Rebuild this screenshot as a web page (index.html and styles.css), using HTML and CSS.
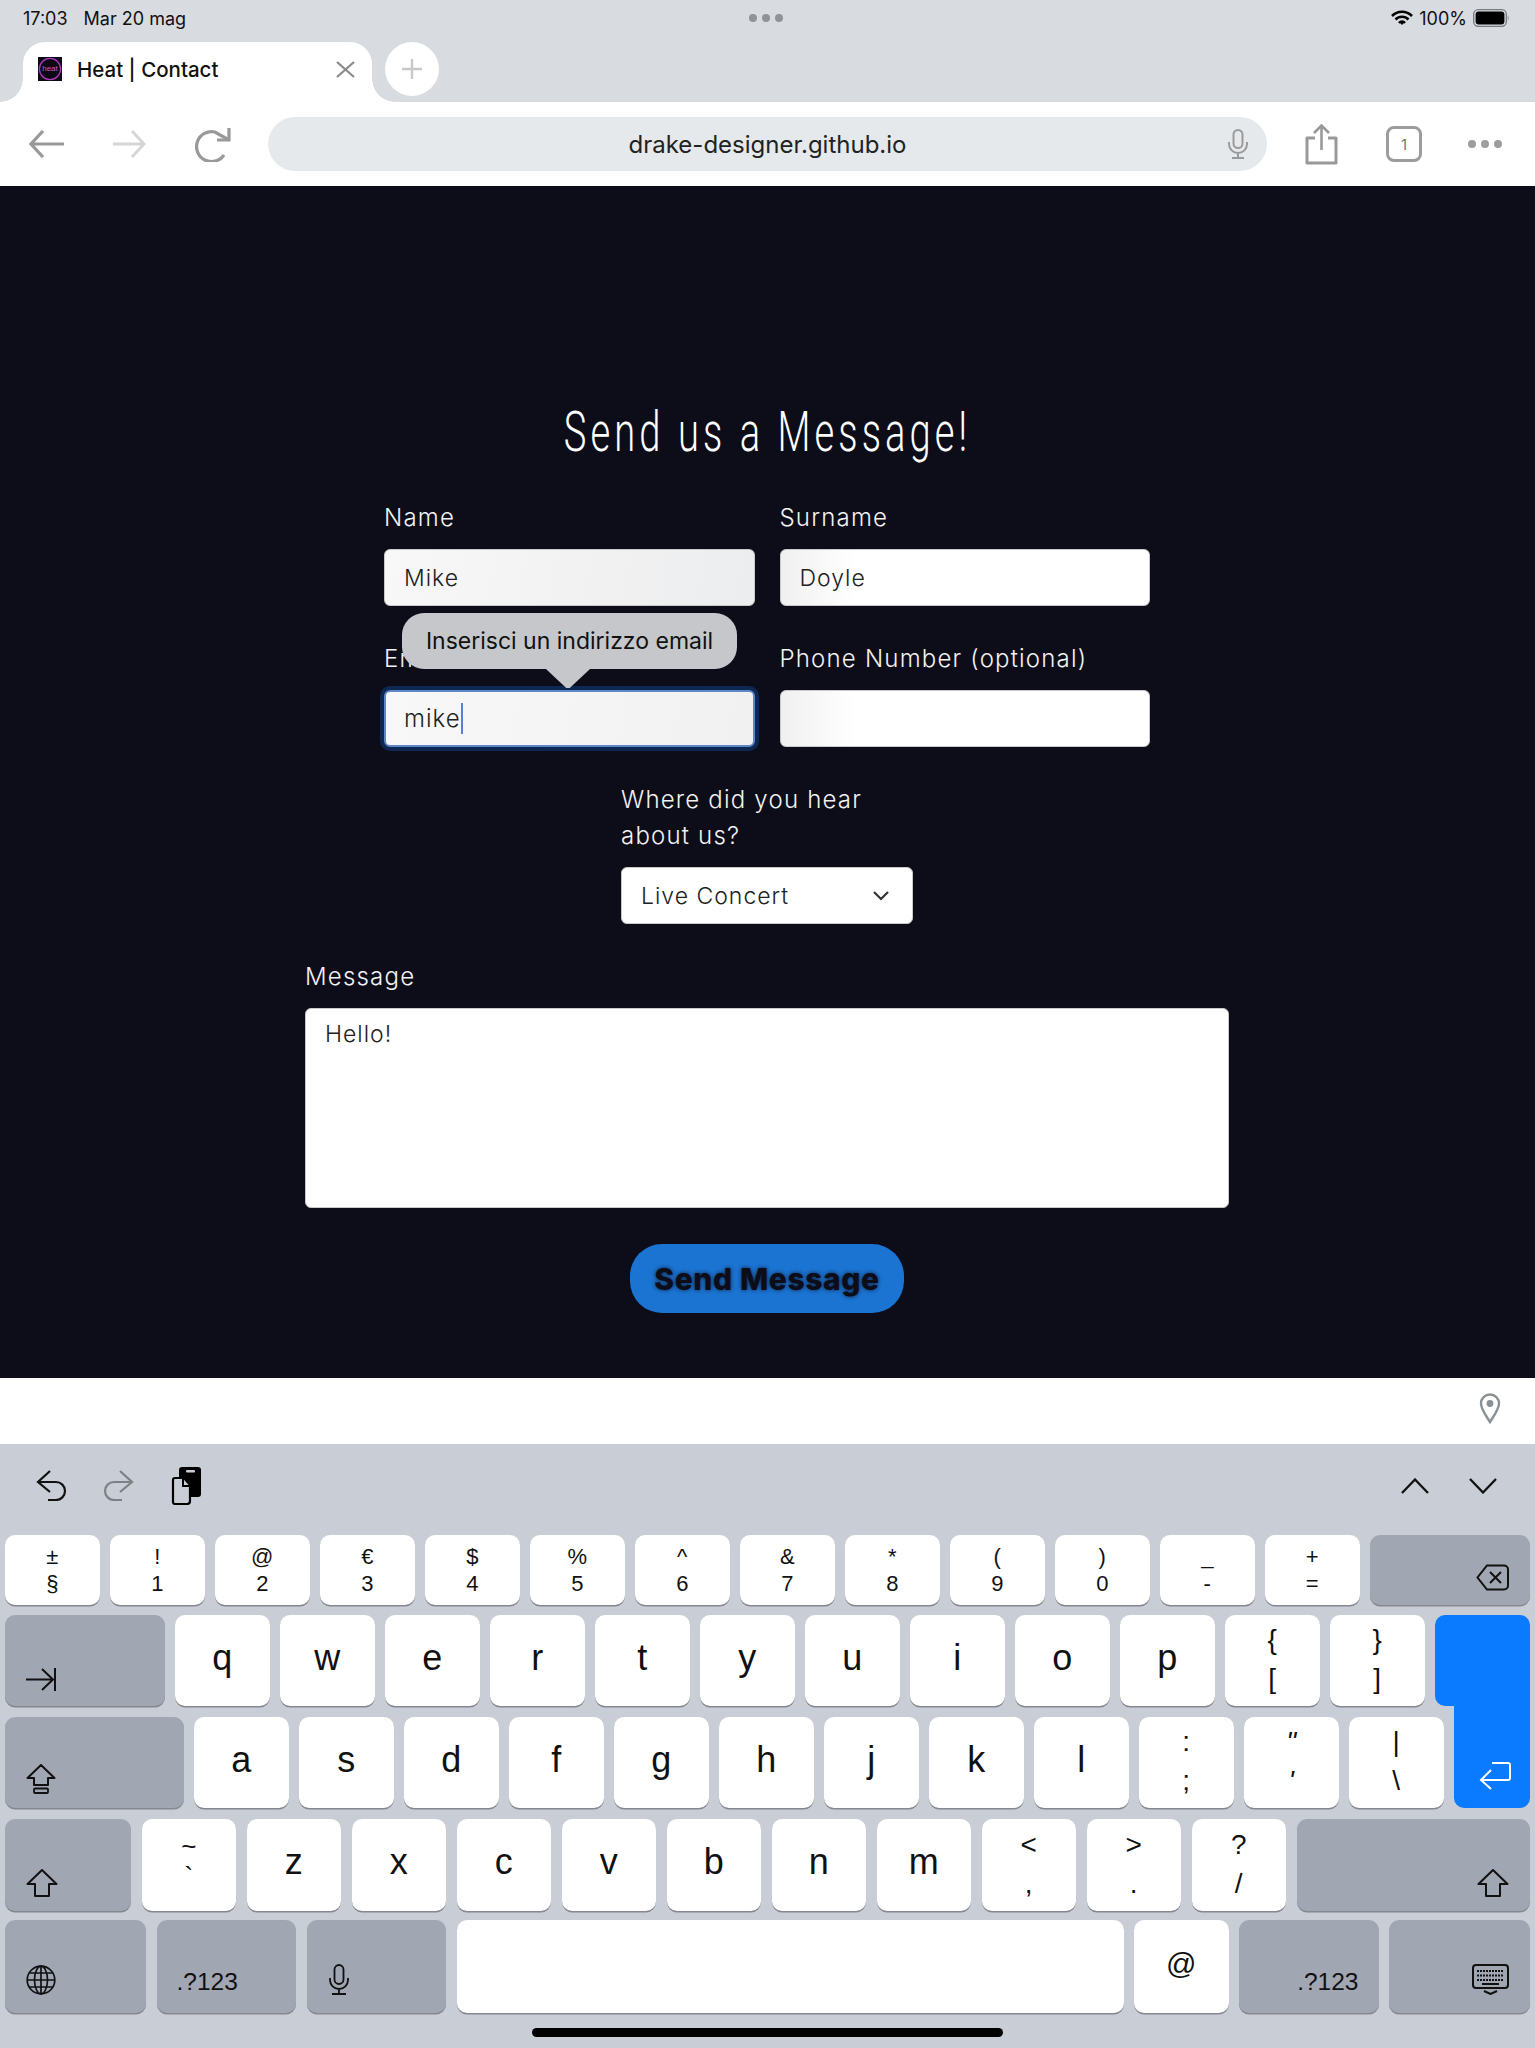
FILE: index.html
```html
<!DOCTYPE html>
<html lang="it">
<head>
    <meta charset="UTF-8">
    <meta name="viewport" content="width=device-width, initial-scale=1.0">
    <title>Heat | Contact</title>
    <link rel="stylesheet" href="styles.css">
</head>
<body>
    <header class="chrome">
        <div class="status">
            <div class="status-left"><span>17:03</span><span>Mar 20 mag</span></div>
            <div class="status-dots"><i></i><i></i><i></i></div>
            <div class="status-right">
                <svg width="22" height="16" viewBox="0 0 22 16"><path d="M1 6a14 14 0 0 1 20 0M4.500 9.500a9 9 0 0 1 13 0M8 13a4 4 0 0 1 6 0" fill="none" stroke="#000" stroke-width="2.600"/><path d="M9.600 13.400 11 15l1.400-1.600a2 2 0 0 0-2.800 0z" fill="#000"/></svg>
                <span>100%</span>
                <svg width="36" height="18" viewBox="0 0 36 18"><rect x=".7" y=".7" width="32.600" height="16.600" rx="4.500" fill="none" stroke="#77797d" stroke-width="1.300"/><rect x="2.600" y="2.600" width="28.800" height="12.800" rx="3" fill="#000"/><path d="M34.800 6.500c1 .4 1 4.600 0 5z" fill="#77797d"/></svg>
            </div>
        </div>
        <div class="tabstrip">
            <div class="tab">
                <svg class="favicon" width="24" height="24" viewBox="0 0 24 24"><rect width="24" height="24" fill="#0c0714"/><circle cx="12" cy="12" r="10.600" fill="none" stroke="#b23ac0" stroke-width="1.300"/><text x="12" y="14" text-anchor="middle" class="favicon-text">heat</text></svg>
                <span class="tab-title">Heat | Contact</span>
                <svg class="tab-close" width="19" height="17" viewBox="0 0 19 17"><path d="M1 1l17 15M18 1 1 16" stroke="#8a8a8a" stroke-width="2.200" fill="none"/></svg>
            </div>
            <div class="newtab"><svg width="22" height="22" viewBox="0 0 22 22"><path d="M11 1v20M1 11h20" stroke="#c8c8c8" stroke-width="2.400"/></svg></div>
        </div>
        <div class="toolbar">
            <svg class="tb-back" width="36" height="28" viewBox="0 0 36 28"><path d="M35 14H2M14 1 2 14l12 13" fill="none" stroke="#999" stroke-width="3.200"/></svg>
            <svg class="tb-forward" width="34" height="28" viewBox="0 0 34 28"><path d="M1 14h31M20 1l12 13-12 13" fill="none" stroke="#d6d6d6" stroke-width="3"/></svg>
            <svg class="tb-reload" width="36" height="35" viewBox="0 0 36 35"><path d="M29 28A15 15 0 1 1 20 5l14 8" fill="none" stroke="#999" stroke-width="3.200"/><path d="M34 1v12H22" fill="none" stroke="#999" stroke-width="3.200"/></svg>
            <div class="urlbar">
                <span>drake-designer.github.io</span>
                <svg class="url-mic" width="22" height="30" viewBox="0 0 22 30"><rect x="6.500" y="1" width="9" height="18" rx="4.500" fill="none" stroke="#9a9a9a" stroke-width="2"/><path d="M2 13v2a9 9 0 0 0 18 0v-2M11 24v5M5 29h12" fill="none" stroke="#9a9a9a" stroke-width="2"/></svg>
            </div>
            <svg class="tb-share" width="33" height="41" viewBox="0 0 33 41"><path d="M10 14H2v25h29V14h-8" fill="none" stroke="#999" stroke-width="3" stroke-linejoin="round"/><path d="M16.500 26V2M9 9l7.500-7.500L24 9" fill="none" stroke="#999" stroke-width="2.600"/></svg>
            <div class="tb-tabs">1</div>
            <div class="tb-more"><i></i><i></i><i></i></div>
        </div>
    </header>

    <main class="page">
        <h1 class="page-title"><span>Send us a Message!</span></h1>
        <form class="contact-form">
            <div class="form-grid">
                <div class="field">
                    <label>Name</label>
                    <div class="input input-gray">Mike</div>
                </div>
                <div class="field">
                    <label>Surname</label>
                    <div class="input input-fade">Doyle</div>
                </div>
                <div class="field field-email">
                    <label>Email</label>
                    <div class="input input-focus">mike<b class="caret"></b></div>
                    <div class="tooltip">Inserisci un indirizzo email</div>
                </div>
                <div class="field">
                    <label>Phone Number (optional)</label>
                    <div class="input input-fade"></div>
                </div>
            </div>
            <div class="field field-hear">
                <label>Where did you hear about us?</label>
                <div class="input select">Live Concert
                    <svg width="18" height="11" viewBox="0 0 18 11"><path d="M2 2l7 7 7-7" fill="none" stroke="#333" stroke-width="2.200"/></svg>
                </div>
            </div>
            <div class="field field-message">
                <label>Message</label>
                <div class="textarea">Hello!</div>
            </div>
            <button type="button" class="send">Send Message</button>
        </form>
    </main>

    <div class="assist">
        <svg width="22" height="31" viewBox="0 0 22 31"><path d="M11 29C6 21 2 16 2 10.500a9 9 0 0 1 18 0C20 16 16 21 11 29z" fill="none" stroke="#8a9094" stroke-width="2.400"/><circle cx="11" cy="10.500" r="3.400" fill="#8a9094"/></svg>
    </div>

    <section class="keyboard">
        <div class="kb-tools">
            <div class="kb-tools-left">
                <svg width="31" height="31" viewBox="0 0 31 31"><path d="M14 1 2 12l12 10M2 12h18a9 9 0 0 1 0 18h-8" fill="none" stroke="#111" stroke-width="2.200"/></svg>
                <svg width="31" height="31" viewBox="0 0 31 31"><path d="M17 1l12 11-12 10M29 12H11a9 9 0 0 0 0 18h8" fill="none" stroke="#7d8085" stroke-width="2.200"/></svg>
                <svg class="kb-clip" width="31" height="38" viewBox="0 0 31 38"><rect x="8" y="0" width="22" height="30" rx="3" fill="#000"/><rect x="15" y="3" width="9" height="2.500" rx="1" fill="#c9cdd5"/><path d="M2 13a2 2 0 0 1 2-2h9l6 7v16a3 3 0 0 1-3 3H4a2 2 0 0 1-2-2z" fill="#c9cdd5" stroke="#000" stroke-width="2.200"/><path d="M12 11v8h7" fill="none" stroke="#000" stroke-width="2"/></svg>
            </div>
            <div class="kb-tools-right">
                <svg width="28" height="16" viewBox="0 0 28 16"><path d="M1 15 14 1.500 27 15" fill="none" stroke="#111" stroke-width="2.300"/></svg>
                <svg width="28" height="16" viewBox="0 0 28 16"><path d="M1 1l13 13.500L27 1" fill="none" stroke="#111" stroke-width="2.300"/></svg>
            </div>
        </div>

        <div class="kb-row row-num">
            <div class="key dbl"><span>±</span><span>§</span></div>
            <div class="key dbl"><span>!</span><span>1</span></div>
            <div class="key dbl"><span>@</span><span>2</span></div>
            <div class="key dbl"><span>€</span><span>3</span></div>
            <div class="key dbl"><span>$</span><span>4</span></div>
            <div class="key dbl"><span>%</span><span>5</span></div>
            <div class="key dbl"><span>^</span><span>6</span></div>
            <div class="key dbl"><span>&amp;</span><span>7</span></div>
            <div class="key dbl"><span>*</span><span>8</span></div>
            <div class="key dbl"><span>(</span><span>9</span></div>
            <div class="key dbl"><span>)</span><span>0</span></div>
            <div class="key dbl"><span>_</span><span>-</span></div>
            <div class="key dbl"><span>+</span><span>=</span></div>
            <div class="key mod grow end">
                <svg width="33" height="27" viewBox="0 0 33 27"><path d="M11 1.500h17a4 4 0 0 1 4 4v16a4 4 0 0 1-4 4H11L1.500 13.500z" fill="none" stroke="#111" stroke-width="2"/><path d="M14 8l11 11M25 8 14 19" stroke="#111" stroke-width="2"/></svg>
            </div>
        </div>

        <div class="kb-row row-tall">
            <div class="key mod w-tab">
                <svg width="30" height="25" viewBox="0 0 30 25"><path d="M0 12.500h26M16 2l11 10.500L16 23M29 1v23" fill="none" stroke="#111" stroke-width="2"/></svg>
            </div>
            <div class="key ltr">q</div>
            <div class="key ltr">w</div>
            <div class="key ltr">e</div>
            <div class="key ltr">r</div>
            <div class="key ltr">t</div>
            <div class="key ltr">y</div>
            <div class="key ltr">u</div>
            <div class="key ltr">i</div>
            <div class="key ltr">o</div>
            <div class="key ltr">p</div>
            <div class="key dbl big"><span>{</span><span>[</span></div>
            <div class="key dbl big"><span>}</span><span>]</span></div>
            <div class="key return-top"></div>
        </div>

        <div class="kb-row row-tall row-home">
            <div class="key mod w-lock">
                <svg width="30" height="30" viewBox="0 0 30 30"><path d="M15 1 1.500 14H8v7h14v-7h6.500z" fill="none" stroke="#111" stroke-width="2" stroke-linejoin="round"/><rect x="8" y="24.500" width="14" height="4.500" rx="1" fill="none" stroke="#111" stroke-width="1.800"/></svg>
            </div>
            <div class="key ltr">a</div>
            <div class="key ltr">s</div>
            <div class="key ltr">d</div>
            <div class="key ltr">f</div>
            <div class="key ltr">g</div>
            <div class="key ltr">h</div>
            <div class="key ltr">j</div>
            <div class="key ltr">k</div>
            <div class="key ltr">l</div>
            <div class="key dbl big"><span>:</span><span>;</span></div>
            <div class="key dbl big slanted"><span>"</span><span>'</span></div>
            <div class="key dbl big"><span>|</span><span>\</span></div>
            <div class="key return-bottom">
                <svg width="32" height="28" viewBox="0 0 32 28"><path d="M13 1h16a2 2 0 0 1 2 2v13a2 2 0 0 1-2 2H3M12 8 2 18l10 9" fill="none" stroke="#fff" stroke-width="2"/></svg>
            </div>
        </div>

        <div class="kb-row row-low">
            <div class="key mod w-shift">
                <svg width="32" height="28" viewBox="0 0 32 28"><path d="M16 1 1.500 15H9v12h14V15h7.500z" fill="none" stroke="#111" stroke-width="2" stroke-linejoin="round"/></svg>
            </div>
            <div class="key dbl small-top"><span>~</span><span>`</span></div>
            <div class="key ltr">z</div>
            <div class="key ltr">x</div>
            <div class="key ltr">c</div>
            <div class="key ltr">v</div>
            <div class="key ltr">b</div>
            <div class="key ltr">n</div>
            <div class="key ltr">m</div>
            <div class="key dbl big"><span>&lt;</span><span>,</span></div>
            <div class="key dbl big"><span>&gt;</span><span>.</span></div>
            <div class="key dbl big"><span>?</span><span>/</span></div>
            <div class="key mod grow end">
                <svg width="32" height="28" viewBox="0 0 32 28"><path d="M16 1 1.500 15H9v12h14V15h7.500z" fill="none" stroke="#111" stroke-width="2" stroke-linejoin="round"/></svg>
            </div>
        </div>

        <div class="kb-row row-bottom">
            <div class="key mod w-globe">
                <svg width="30" height="30" viewBox="0 0 30 30"><g fill="none" stroke="#111" stroke-width="1.700"><circle cx="15" cy="15" r="13.800"/><ellipse cx="15" cy="15" rx="6.500" ry="13.800"/><path d="M15 1v28M1.500 15h27M3.500 8h23M3.500 22h23"/></g></svg>
            </div>
            <div class="key mod w-alt num-left">.?123</div>
            <div class="key mod w-alt">
                <svg width="22" height="31" viewBox="0 0 22 31"><rect x="6.500" y="1" width="9" height="19" rx="4.500" fill="none" stroke="#111" stroke-width="1.800"/><path d="M2 14v2a9 9 0 0 0 18 0v-2M11 25v5M4 30h14" fill="none" stroke="#111" stroke-width="1.800"/></svg>
            </div>
            <div class="key space"></div>
            <div class="key at">@</div>
            <div class="key mod w-alt end num-right">.?123</div>
            <div class="key mod grow end">
                <svg width="37" height="31" viewBox="0 0 37 31"><rect x="1" y="1" width="35" height="23" rx="3" fill="none" stroke="#111" stroke-width="2"/><path d="M5 7h27M5 11.500h27M5 16h27" stroke="#111" stroke-width="2.200" stroke-dasharray="2 1"/><path d="M10 20h17" stroke="#111" stroke-width="2"/><path d="M12 27l6.500 3 6.500-3" fill="none" stroke="#111" stroke-width="2"/></svg>
            </div>
        </div>

        <div class="homebar"></div>
    </section>
</body>
</html>
```

FILE: styles.css
```css
* {
    box-sizing: border-box;
}
body {
    margin: 0;
    width: 1535px;
    height: 2048px;
    overflow: hidden;
    font-family: Inter, "Liberation Sans", sans-serif;
    background-color: #c9cdd5;
}

/* browser chrome */
.chrome {
    background-color: #d8dbe0;
}
.status {
    height: 42px;
    display: grid;
    grid-template-columns: 1fr auto 1fr;
    align-items: center;
    padding: 0 26px 6px 23px;
    font-size: 18px;
    color: #111;
}
.status-left {
    display: flex;
    gap: 16px;
}
.status-right {
    display: flex;
    align-items: center;
    justify-content: flex-end;
    gap: 6px;
}
.status-dots {
    display: flex;
    gap: 5px;
}
.status-dots i {
    width: 8px;
    height: 8px;
    border-radius: 50%;
    background-color: #8f9297;
}
.tabstrip {
    height: 60px;
    display: flex;
    align-items: flex-start;
    gap: 13px;
    padding-left: 23px;
}
.tab {
    width: 349px;
    height: 60px;
    background-color: #fff;
    border-radius: 22px 22px 0 0;
    display: flex;
    align-items: center;
    padding: 0 17px 6px 15px;
    position: relative;
}
.tab::before,
.tab::after {
    content: "";
    position: absolute;
    bottom: 0;
    width: 23px;
    height: 23px;
}
.tab::before {
    left: -23px;
    background: radial-gradient(circle at 0 0, transparent 22.500px, #fff 23px);
}
.tab::after {
    right: -23px;
    background: radial-gradient(circle at 100% 0, transparent 22.500px, #fff 23px);
}
.favicon {
    flex: none;
}
.favicon-text {
    font-family: "Liberation Sans", sans-serif;
    font-size: 8px;
    fill: #d552d8;
}
.tab-title {
    margin-left: 15px;
    font-size: 20.500px;
    font-weight: 500;
    color: #111;
    flex: 1;
}
.newtab {
    width: 54px;
    height: 54px;
    border-radius: 50%;
    background-color: #fff;
    display: flex;
    align-items: center;
    justify-content: center;
}
.toolbar {
    height: 84px;
    background-color: #fff;
    display: flex;
    align-items: center;
}
.tb-back {
    margin-left: 29px;
}
.tb-forward {
    margin-left: 47px;
}
.tb-reload {
    margin-left: 49px;
}
.urlbar {
    width: 999px;
    height: 54px;
    margin-left: 37px;
    border-radius: 27px;
    background-color: #e6e9ec;
    font-size: 24px;
    color: #222;
    display: flex;
    align-items: center;
    justify-content: center;
    position: relative;
}
.url-mic {
    position: absolute;
    right: 18px;
    top: 12px;
}
.tb-share {
    margin-left: 38px;
}
.tb-tabs {
    width: 36px;
    height: 36px;
    margin-left: 48px;
    border: 3px solid #9d9d9d;
    border-radius: 8px;
    font-size: 15px;
    color: #777;
    display: flex;
    align-items: center;
    justify-content: center;
}
.tb-more {
    display: flex;
    gap: 5px;
    margin-left: 46px;
}
.tb-more i {
    width: 8px;
    height: 8px;
    border-radius: 50%;
    background-color: #9d9d9d;
}

/* page */
.page {
    height: 1192px;
    background-color: #0d0d1a;
    padding-top: 214px;
    color: #f2f2f2;
}
.page-title {
    margin: 0 0 36px;
    height: 64px;
    line-height: 64px;
    font-family: Roboto, "Liberation Sans", sans-serif;
    font-weight: 300;
    font-size: 56px;
    letter-spacing: 6px;
    text-align: center;
    color: #fff;
}
.page-title span {
    display: inline-block;
    transform: scaleX(0.68);
}
.contact-form {
    display: flex;
    flex-direction: column;
    align-items: center;
}
.form-grid {
    width: 766px;
    margin-left: -1px;
    display: grid;
    grid-template-columns: 1fr 1fr;
    column-gap: 25px;
    row-gap: 35px;
}
.field {
    display: flex;
    flex-direction: column;
}
.field label {
    font-size: 24px;
    font-weight: 300;
    line-height: 36px;
    letter-spacing: 1.200px;
    margin-bottom: 13px;
}
.field-email {
    position: relative;
}
.input {
    height: 57px;
    border-radius: 6px;
    background-color: #fff;
    border: 1px solid #c9c9c9;
    padding: 0 19px;
    display: flex;
    align-items: center;
    font-size: 23px;
    font-weight: 300;
    letter-spacing: 1px;
    color: #222;
}
.input-gray {
    background: linear-gradient(100deg, #f8f8f8 0%, #f2f2f3 50%, #ecedee 100%);
}
.input-fade {
    background: linear-gradient(90deg, #f0f0f0 0%, #fff 20%);
}
.input-focus {
    background: linear-gradient(100deg, #f8f8f9 0%, #f1f1f2 100%);
    border: 2px solid #5f86c6;
    box-shadow: 0 0 0 4px #0d2852;
    padding-left: 18px;
    font-size: 24px;
}
.caret {
    width: 2px;
    height: 31px;
    background-color: #5d7fd0;
}
.tooltip {
    position: absolute;
    left: 18px;
    top: -28px;
    width: 335px;
    height: 56px;
    border-radius: 22px;
    background-color: #c5c7ca;
    color: #111;
    font-size: 23px;
    display: flex;
    align-items: center;
    justify-content: center;
}
.tooltip::after {
    content: "";
    position: absolute;
    left: 144px;
    top: 56px;
    width: 44px;
    height: 19px;
    background-color: #c5c7ca;
    clip-path: polygon(0 0, 100% 0, 54% 100%, 46% 100%);
}
.field-hear {
    width: 292px;
    margin-top: 35px;
    margin-left: -1px;
}
.field-hear .select {
    justify-content: space-between;
    padding-right: 22px;
}
.field-message {
    width: 924px;
    margin-top: 35px;
    margin-left: -1px;
}
.textarea {
    height: 200px;
    border-radius: 6px;
    background-color: #fff;
    border: 1px solid #c9c9c9;
    padding: 11px 19px;
    font-size: 23px;
    font-weight: 300;
    letter-spacing: 1px;
    color: #222;
}
.send {
    margin-top: 36px;
    margin-left: -1px;
    width: 274px;
    height: 69px;
    border: none;
    border-radius: 32px;
    background-color: #1b74d2;
    font-family: Inter, "Liberation Sans", sans-serif;
    font-weight: 800;
    font-size: 30px;
    letter-spacing: 0.600px;
    color: #0d0d1a;
    text-shadow: 0 0 4px rgba(13, 13, 26, 0.8);
}

/* bar above the keyboard */
.assist {
    height: 66px;
    background-color: #fff;
    display: flex;
    justify-content: flex-end;
    padding: 15px 34px 0 0;
}

/* keyboard */
.keyboard {
    height: 604px;
    background-color: #c9cdd5;
    padding: 0 5px;
}
.kb-tools {
    height: 91px;
    display: flex;
    justify-content: space-between;
    align-items: center;
    padding: 0 33px 8px 31px;
}
.kb-tools-left {
    display: flex;
    align-items: center;
    gap: 36px;
}
.kb-clip {
    margin-left: 1px;
}
.kb-tools-right {
    display: flex;
    gap: 40px;
}
.kb-row {
    display: flex;
    gap: 10.500px;
}
.row-num {
    height: 70px;
    margin-bottom: 10px;
}
.row-tall {
    height: 91px;
    margin-bottom: 11px;
}
.row-low {
    height: 92px;
    margin-bottom: 9px;
}
.row-bottom {
    height: 93px;
}
.key {
    width: 94.500px;
    flex: none;
    border-radius: 10px;
    background-color: #fff;
    box-shadow: 0 1.500px 0 #85888f;
    color: #111;
    font-family: "Liberation Sans", sans-serif;
    display: flex;
    align-items: center;
    justify-content: center;
}
.ltr {
    font-size: 36px;
    padding-bottom: 6px;
}
.dbl {
    flex-direction: column;
    font-size: 22px;
    line-height: 27px;
}
.big {
    font-size: 28px;
    line-height: 39px;
    padding-bottom: 3px;
}
.slanted {
    font-style: italic;
}
.small-top {
    font-size: 26px;
    line-height: 30px;
    padding-bottom: 8px;
}
.mod {
    background-color: #a1a6b3;
    align-items: flex-end;
    justify-content: flex-start;
    padding: 0 21px 14px;
}
.row-bottom .mod {
    padding-bottom: 18px;
}
.end {
    justify-content: flex-end;
}
.grow {
    flex: 1;
    padding-right: 21px;
}
.w-tab {
    width: 159.500px;
}
.w-lock {
    width: 178.500px;
}
.w-shift {
    width: 126px;
}
.w-globe {
    width: 141px;
}
.w-alt {
    width: 139.500px;
}
.row-bottom .num-left,
.row-bottom .num-right {
    font-size: 24.500px;
    padding: 0 20px 17px;
    line-height: 28px;
}
.space {
    width: 667px;
}
.at {
    font-size: 30px;
    padding-bottom: 6px;
}
.return-top,
.return-bottom {
    background-color: #0a7aff;
    box-shadow: none;
}
.return-top {
    flex: 1;
    border-radius: 10px 10px 0 10px;
}
.return-bottom {
    flex: 1;
    width: auto;
    border-radius: 0 0 10px 10px;
    position: relative;
    align-items: flex-end;
    justify-content: flex-end;
    padding: 0 19px 18px 0;
}
.return-bottom::before {
    content: "";
    position: absolute;
    left: 0;
    right: 0;
    top: -12px;
    height: 12px;
    background-color: #0a7aff;
}
.homebar {
    width: 471px;
    height: 9px;
    margin: 15px auto 0;
    border-radius: 5px;
    background-color: #000;
}
```
